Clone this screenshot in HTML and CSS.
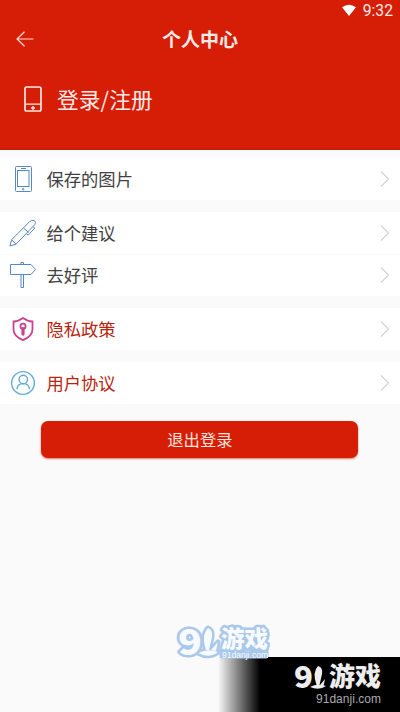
FILE: index.html
```html
<!DOCTYPE html>
<html lang="zh-CN">
<head>
<meta charset="utf-8">
<title>个人中心</title>
<link rel="stylesheet" href="styles.css">
</head>
<body>
<div class="screen">
  <header class="header">
    <div class="status">
      <svg class="wifi" width="16" height="13" viewBox="0 0 16 13"><path d="M1 3.3Q8-1.9 15 3.3L8 12Z" fill="#fff"/></svg>
      <span class="time">9:32</span>
    </div>
    <div class="nav">
      <svg class="back" width="18" height="16" viewBox="0 0 18 16"><path d="M17.5 8H1M8.5 .8L1 8l7.5 7.2" fill="none" stroke="#ffd9d2" stroke-width="1.2"/></svg>
      <h1 class="title">个人中心</h1>
    </div>
    <div class="login">
      <svg width="18" height="26" viewBox="0 0 18 26"><rect x="1" y="1" width="16" height="24" rx="1.7" fill="none" stroke="#ffe9e4" stroke-width="1.7"/><path d="M1 18.2h16M9 20v4M7 22h4" fill="none" stroke="#ffe9e4" stroke-width="1.3"/></svg>
      <span class="login-text">登录/注册</span>
    </div>
  </header>
  <main>
    <section class="group">
      <div class="row">
        <svg class="icon" width="28" height="28" viewBox="0 0 28 28" fill="none" stroke="#5588c7"><rect x="6.5" y="1.5" width="16" height="25" rx="1"/><rect x="8.5" y="5.5" width="11.5" height="16"/><path d="M12 3.5h5"/><circle cx="14.2" cy="24.2" r=".8"/></svg>
        <span class="label">保存的图片</span>
        <svg class="chevron" width="10" height="16" viewBox="0 0 10 16"><path d="M1 .5L8.5 8 1 15.5"/></svg>
      </div>
    </section>
    <section class="group">
      <div class="row">
        <svg class="icon" width="28" height="28" viewBox="0 0 28 28" fill="none" stroke="#5588c7" stroke-linejoin="round"><path d="M1 27l1.600-6.300L20.500 2.800q2.200-2.100 4.700-1.300 2.200 1.400.6 4.100L7 25.200ZM2.600 20.700L7 25.200M14.500 9l5 4.500M24 7.800l1.800 1.200-6.500 7-1.800-1"/></svg>
        <span class="label">给个建议</span>
        <svg class="chevron" width="10" height="16" viewBox="0 0 10 16"><path d="M1 .5L8.5 8 1 15.5"/></svg>
      </div>
      <div class="row">
        <svg class="icon" width="28" height="28" viewBox="0 0 28 28" fill="none" stroke="#5588c7" stroke-linejoin="round"><path d="M1.500 3.500h20.500L26.500 8.500l-4.500 5H1.500ZM12 13.500v13h2.500v-13M11.800 3.500V1.500h2.700v2"/></svg>
        <span class="label">去好评</span>
        <svg class="chevron" width="10" height="16" viewBox="0 0 10 16"><path d="M1 .5L8.5 8 1 15.5"/></svg>
      </div>
    </section>
    <section class="group">
      <div class="row">
        <svg class="icon" width="28" height="28" viewBox="0 0 28 28" fill="none" stroke="#c7458f" stroke-width="1.8"><path d="M14 3q5 3.600 9.500 3.500v7.800q0 7-9.500 10.800-9.500-3.800-9.500-10.800V6.500Q9 6.600 14 3Z"/><circle cx="14" cy="11.200" r="2.600"/><path d="M14 13.600v5.500" stroke-width="3.200" stroke-linecap="round"/></svg>
        <span class="label accent">隐私政策</span>
        <svg class="chevron" width="10" height="16" viewBox="0 0 10 16"><path d="M1 .5L8.5 8 1 15.5"/></svg>
      </div>
    </section>
    <section class="group">
      <div class="row">
        <svg class="icon" width="28" height="28" viewBox="0 0 28 28" fill="none" stroke="#63add8" stroke-width="1.4"><circle cx="14" cy="14" r="11.4"/><circle cx="14.3" cy="10.5" r="4.2"/><path d="M8 20.300q.3-5.700 6.200-5.700t6.200 5.700"/></svg>
        <span class="label accent">用户协议</span>
        <svg class="chevron" width="10" height="16" viewBox="0 0 10 16"><path d="M1 .5L8.5 8 1 15.5"/></svg>
      </div>
    </section>
    <button class="logout">退出登录</button>
  </main>
  <div class="banner"></div>
  <svg class="marks" width="240" height="102" viewBox="0 0 240 102">
    <g class="mark-blue">
      <path class="backing" d="M62 38h44v8H62Z"/>
      <path class="outline" d="M48 18q5 2 4 9l-3 13h-3q-5-15 2-22ZM38 43q9-5 20-1-9 7-20 1ZM51 40l7-8-2 9Z"/>
      <text class="nine outline" x="18" y="44.5" font-size="35" textLength="24" lengthAdjust="spacingAndGlyphs">9</text>
      <text class="brand outline" x="61" y="36.5" font-size="23" textLength="47" lengthAdjust="spacingAndGlyphs">游戏</text>
      <text class="site" x="62" y="47.5" font-size="9" textLength="46" lengthAdjust="spacingAndGlyphs">91danji.com</text>
    </g>
    <g class="mark-gray">
      <path d="M158 56q5 1 4 8l-2.500 11h-3q-4.500-13 1.500-19ZM150 77q7-4 16-1-7 5-16 1ZM160 75l5-6-1.500 7Z"/>
      <text class="nine" x="134" y="78" font-size="30" textLength="19" lengthAdjust="spacingAndGlyphs">9</text>
      <text class="brand" x="169" y="76" font-size="26" textLength="52">游戏</text>
      <text class="site" x="156" y="93" font-size="12" textLength="65">91danji.com</text>
    </g>
  </svg>
</div>
</body>
</html>
```

FILE: styles.css
```css
* { box-sizing: border-box; }
body { margin: 0; }
.screen {
  position: relative;
  width: 400px;
  height: 712px;
  overflow: hidden;
  background: #fafafa;
  font-family: "Noto Sans CJK SC", sans-serif;
}
.header {
  height: 150px;
  background: #d61d05;
  color: #ffebe6;
  border-bottom: 1px solid #b6220f;
}
.status {
  height: 22px;
  display: flex;
  align-items: center;
  justify-content: flex-end;
  gap: 6px;
  padding: 0 7px 0 0;
}
.wifi { margin-top: -1px; }
.time { font: 400 15.7px/22px Roboto, sans-serif; }
.nav {
  display: flex;
  align-items: center;
  height: 34px;
  padding-left: 16px;
}
.title {
  flex: 1;
  margin: 0 34px 0 0;
  text-align: center;
  font-size: 19px;
  line-height: 34px;
  font-weight: 700;
}
.login {
  display: flex;
  align-items: center;
  gap: 15px;
  height: 40px;
  margin-top: 23px;
  padding-left: 24px;
}
.login-text { font-size: 21.8px; line-height: 30px; }
main { padding-top: 8px; }
.group { margin-bottom: 12px; background: #fff; }
.row {
  display: flex;
  align-items: center;
  height: 42px;
  padding: 0 10px 0 9px;
}
.row + .row { box-shadow: inset 0 1px #fafafa; }
.label {
  flex: 1;
  margin-left: 9.5px;
  font-size: 17.3px;
  line-height: 26px;
  color: #414141;
}
.accent { color: #b7240f; }
.chevron { fill: none; stroke: #d2d2d2; stroke-width: 1.1; }
.logout {
  display: block;
  width: 317px;
  height: 37px;
  margin: 17px auto 0 41.4px;
  padding: 0;
  border: 0;
  border-radius: 7px;
  background: #d61d05;
  color: #ffe3dd;
  box-shadow: 0 1px 2px #d61d0599;
  font: 400 16.3px/37px "Noto Sans CJK SC", sans-serif;
}
.banner {
  position: absolute;
  right: 0;
  bottom: 0;
  width: 182px;
  height: 55px;
  background: linear-gradient(90deg, #00000000, #000 42px);
}
.marks { position: absolute; left: 160px; bottom: 0; }
.nine,
.brand { font-family: "Noto Sans CJK SC", sans-serif; font-weight: 900; }
.site { font-family: "Liberation Sans", sans-serif; }
.mark-blue { fill: #f7faff; }
.outline, .backing {
  stroke: #a9c8ea;
  stroke-width: 5;
  stroke-linejoin: round;
  paint-order: stroke;
}
.backing { fill: #a9c8ea; }
.mark-gray { fill: #ededed; }
.mark-gray .site { fill: #aaa; }
```
